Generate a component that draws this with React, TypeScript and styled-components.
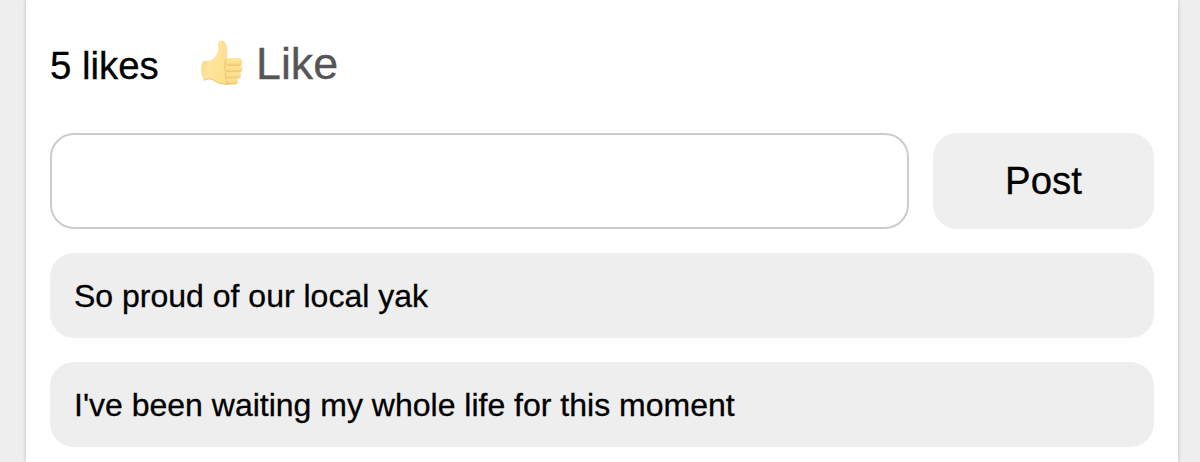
import React from 'react';
import styled, { createGlobalStyle } from 'styled-components';

const Global = createGlobalStyle`
  * { box-sizing: border-box; }
  body { margin: 0; background: #eee; overflow: hidden; font-family: "Liberation Sans", Arial, sans-serif; color: #000; -webkit-text-stroke: 0.3px currentColor; }
`;
const Card = styled.main`
  height: 462px; margin: 0 22px 0 26px; padding: 32px 24px 0; background: #fff;
  box-shadow: 0 0 4px rgba(0,0,0,.22);
`;
const Actions = styled.div`display: flex; align-items: center; height: 64px;`;
const Likes = styled.span`width: 149px; font-size: 38.4px; line-height: 44px; padding-top: 4px; white-space: nowrap;`;
const LikeButton = styled.button`
  display: flex; align-items: center; gap: 11px; padding: 0; border: 0; background: none;
  font: 44.8px/50px "Liberation Sans", Arial, sans-serif; color: #555; -webkit-text-stroke: 0.3px currentColor;
`;
const LikeLabel = styled.span`padding-bottom: 2px;`;
const Thumb = styled.svg`width: 46px; height: 48px;`;
const Form = styled.form`display: flex; gap: 24px; margin-top: 37px;`;
const Input = styled.input`flex: 1; min-width: 0; height: 96px; border: 2px solid #ccc; border-radius: 24px; background: #fff; padding: 0 24px; font-size: 32px;`;
const Post = styled.button`
  width: 221px; height: 96px; border: 0; border-radius: 24px; background: #efefef; padding: 0;
  font: 38.4px "Liberation Sans", Arial, sans-serif; color: #000; -webkit-text-stroke: 0.3px currentColor;
`;
const Comment = styled.div`
  height: 85px; margin-top: 24px; padding: 0 24px; border-radius: 24px; background: #eee;
  font-size: 32px; line-height: 86px; white-space: nowrap;
`;

function ThumbsUp() {
  return (
    <Thumb viewBox="9 10 46 48" aria-hidden="true">
      <defs>
        <linearGradient id="palm" x1="0" y1="0" x2="1" y2="0.25">
          <stop offset="0" stopColor="#f9d583" />
          <stop offset=".35" stopColor="#ffe59b" />
          <stop offset="1" stopColor="#fddf8c" />
        </linearGradient>
        <linearGradient id="finger" x1="0" y1="0" x2="0" y2="1">
          <stop offset="0" stopColor="#ffe89f" />
          <stop offset=".65" stopColor="#fddd88" />
          <stop offset="1" stopColor="#edc270" />
        </linearGradient>
      </defs>
      <path d="M13.3 31.3C17 30.7 20 31.3 22.2 30C25.3 28 27.6 24.5 28.6 21C29.4 18 28.3 15.8 28.5 13.4C28.8 9.7 33.6 9.9 35.5 13.8C37.4 18 37.2 23.5 36.4 28.5L44 31V50C41.5 54.2 37.8 54.7 34 54.2C28.4 53.7 25.2 51.3 20.8 48.8C18.6 48.6 16.6 49.3 14.4 50.4C11 45.5 10.6 36 13.3 31.3Z" fill="url(#palm)" stroke="#f2cc7c" strokeWidth=".4" />
      <rect x="36" y="47.4" width="11.8" height="7" rx="3.2" fill="url(#finger)" />
      <rect x="35.4" y="41.1" width="15.6" height="7.3" rx="3.5" fill="url(#finger)" />
      <rect x="34.7" y="34.7" width="17.7" height="7.5" rx="3.6" fill="url(#finger)" />
      <rect x="34.8" y="27.9" width="17.4" height="8" rx="3.8" fill="url(#finger)" />
      <path d="M36.5 29Q33.8 32 35.3 35.2Q33.6 38.5 35.7 41.6Q34.6 45 36.2 47.8Q35.4 51 37.8 53.4" fill="none" stroke="#e2b565" strokeWidth=".7" strokeLinecap="round" />
      <path d="M14.5 50Q18 48 21 49Q26 51.8 30 53.3Q34 54.7 38 54.4" fill="none" stroke="#deb071" strokeWidth=".6" strokeLinecap="round" />
    </Thumb>
  );
}

export default function App() {
  return (
    <>
      <Global />
      <Card>
        <Actions>
          <Likes>5 likes</Likes>
          <LikeButton>
            <ThumbsUp />
            <LikeLabel>Like</LikeLabel>
          </LikeButton>
        </Actions>
        <Form onSubmit={(e) => e.preventDefault()}>
          <Input aria-label="Comment" />
          <Post>Post</Post>
        </Form>
        <Comment>So proud of our local yak</Comment>
        <Comment>I've been waiting my whole life for this moment</Comment>
      </Card>
    </>
  );
}
